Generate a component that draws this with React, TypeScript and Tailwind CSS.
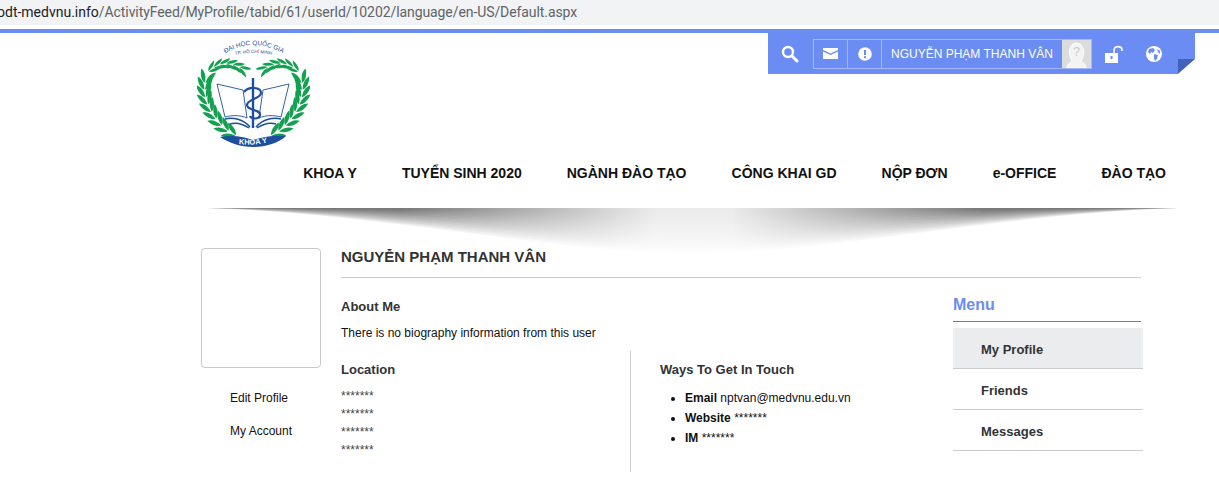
const leaves = (p0: number[], p1: number[], p2: number[], p3: number[], n: number) => {
  const out: { x: number; y: number; a: number }[] = []
  for (let i = 0; i < n; i++) {
    const t = (i + 0.5) / n
    const u = 1 - t
    const x = u * u * u * p0[0] + 3 * u * u * t * p1[0] + 3 * u * t * t * p2[0] + t * t * t * p3[0]
    const y = u * u * u * p0[1] + 3 * u * u * t * p1[1] + 3 * u * t * t * p2[1] + t * t * t * p3[1]
    const dx = 3 * u * u * (p1[0] - p0[0]) + 6 * u * t * (p2[0] - p1[0]) + 3 * t * t * (p3[0] - p2[0])
    const dy = 3 * u * u * (p1[1] - p0[1]) + 6 * u * t * (p2[1] - p1[1]) + 3 * t * t * (p3[1] - p2[1])
    out.push({ x, y, a: (Math.atan2(dy, dx) * 180) / Math.PI })
  }
  return out
}

function Wreath() {
  const side = leaves([40, 99], [16, 88], [2, 58], [10, 40], 9)
  const top = leaves([11, 35], [22, 24], [36, 25], [48, 34], 6)
  return (
    <g>
      {side.map((l, i) => (
        <g key={i} transform={`translate(${l.x} ${l.y}) rotate(${l.a})`}>
          <path d="M-3 -0.4C-1 -5 5 -7.5 10 -7.5C8 -3 3 -0.4 -3 -0.4Z" fill="#12a150" />
          <path d="M-3 0.4C-1 5 5 7.5 10 7.5C8 3 3 0.4 -3 0.4Z" fill="#12a150" />
        </g>
      ))}
      {top.map((l, i) => (
        <g key={i} transform={`translate(${l.x} ${l.y}) rotate(${l.a})`}>
          <path d="M-3 -0.3C-1 -3.5 4 -5 8 -5C6 -2 3 -0.3 -3 -0.3Z" fill="#12a150" />
          <path d="M-3 0.3C-1 3.5 4 5 8 5C6 2 3 0.3 -3 0.3Z" fill="#12a150" />
        </g>
      ))}
    </g>
  )
}

function Logo() {
  return (
    <svg width="113" height="112" viewBox="0 0 113 112" className="mt-[4px] shrink-0">
      <defs>
        <path id="arcTop" d="M24 19Q56 -3 90 19" />
        <path id="arcSub" d="M30 20Q57 12 83 20" />
        <path id="arcBanner" d="M36 106Q56 110 76 104" />
      </defs>
      <text fontSize="6.4" fill="#1d4f9e" fontFamily="'Liberation Sans', sans-serif">
        <textPath href="#arcTop" startOffset="50%" textAnchor="middle">ĐẠI HỌC QUỐC GIA</textPath>
      </text>
      <text fontSize="4.6" fill="#1d4f9e" fontFamily="'Liberation Sans', sans-serif">
        <textPath href="#arcSub" startOffset="50%" textAnchor="middle">TP. HỒ CHÍ MINH</textPath>
      </text>
      <Wreath />
      <g transform="translate(113 0) scale(-1 1)">
        <Wreath />
      </g>
      {/* book */}
      <path d="M20 47L46 53L50 81C43 78 35 78 28 80Z" fill="#ffffff" stroke="#1d4f9e" strokeWidth="0.9" />
      <path d="M92 47L66 53L62 81C69 78 77 78 84 80Z" fill="#ffffff" stroke="#1d4f9e" strokeWidth="0.9" />
      <path d="M28 82C36 80 46 82 53 90M33 87C39 85 46 87 52 91" fill="none" stroke="#1d4f9e" strokeWidth="1.5" />
      <path d="M84 82C76 80 66 82 59 90M79 87C73 85 66 87 60 91" fill="none" stroke="#1d4f9e" strokeWidth="1.5" />
      {/* staff and snake */}
      <path d="M56 41V91" stroke="#1d4f9e" strokeWidth="2.4" />
      <path d="M47 55C52 49 64 50 64 56C64 62 50 62 50 68C50 74 64 72 63 78C62 83 54 82 53 79" fill="none" stroke="#1d4f9e" strokeWidth="2.2" />
      {/* banner */}
      <path d="M23 100C36 98 44 99 56 103C68 99 78 98 89 99C82 106 68 110 56 110C44 110 32 106 23 100Z" fill="#1d4f9e" />
      <text fontSize="7.5" fontWeight="700" fill="#ffffff" fontFamily="'Liberation Sans', sans-serif">
        <textPath href="#arcBanner" startOffset="50%" textAnchor="middle">KHOA Y</textPath>
      </text>
    </svg>
  )
}

function Toolbar() {
  return (
    <div className="relative ml-auto mr-[24px] flex h-[41px] w-[427px] items-center bg-[#6b8cf2] pl-[13px]">
      <svg width="18" height="18" viewBox="0 0 18 18" fill="none" className="shrink-0">
        <circle cx="7" cy="7" r="5" stroke="#fff" strokeWidth="2.4" />
        <path d="M11 11L16 16" stroke="#fff" strokeWidth="3" strokeLinecap="round" />
      </svg>
      <div className="ml-[14px] flex h-[30px] items-stretch border border-[#a3b8f6]">
        <div className="flex w-[34px] items-center justify-center border-r border-[#a3b8f6]">
          <svg width="15" height="11" viewBox="0 0 15 11">
            <path d="M0 0H15V2L7.5 5.5L0 2Z" fill="#fff" />
            <path d="M0 3.5L7.5 7L15 3.5V11H0Z" fill="#fff" />
          </svg>
        </div>
        <div className="flex w-[34px] items-center justify-center border-r border-[#a3b8f6]">
          <svg width="14" height="14" viewBox="0 0 14 14">
            <circle cx="7" cy="7" r="6.8" fill="#fff" />
            <rect x="6" y="3" width="2" height="5" fill="#6b8cf2" />
            <rect x="6" y="9.2" width="2" height="2" fill="#6b8cf2" />
          </svg>
        </div>
        <div className="flex w-[180px] items-center pl-[9px] text-[12px] whitespace-nowrap text-white">NGUYỄN PHẠM THANH VÂN</div>
        <div className="flex h-[28px] w-[29px] items-center justify-center overflow-hidden bg-[#dcdcdc]">
          <svg width="29" height="28" viewBox="0 0 29 28">
            <path d="M5 28C5 23 9 23 10 21C6 15 6 4 14.5 3C23 4 23 15 19 21C20 23 24 23 24 28Z" fill="#f3f3f3" stroke="#fff" />
            <text x="14.5" y="16" fontSize="12" fill="#c9c9c9" textAnchor="middle" fontFamily="'Liberation Sans', sans-serif">?</text>
          </svg>
        </div>
      </div>
      <svg width="19" height="18" viewBox="0 0 19 18" className="ml-[13px] shrink-0">
        <rect x="0" y="8" width="13" height="10" fill="#fff" />
        <rect x="5.5" y="11" width="2" height="3" fill="#6b8cf2" />
        <path d="M9 8V5C9 0.5 17 0.5 17 5V6" fill="none" stroke="#fff" strokeWidth="1.6" />
      </svg>
      <svg width="16" height="16" viewBox="0 0 16 16" className="ml-[22px] shrink-0">
        <circle cx="8" cy="8" r="8" fill="#fff" />
        <path d="M3 3L7 2L9 4L7 7L5 6L4 8L2 6ZM8 8L12 9L11 13L9 15L8 12ZM11 3L14 5L14 8L12 6Z" fill="#6b8cf2" />
      </svg>
      <svg width="17" height="15" viewBox="0 0 17 15" className="absolute right-0 bottom-0">
        <path d="M17 0H0V15Z" fill="#4362b8" />
        <path d="M17 0V15H0Z" fill="#ffffff" />
      </svg>
    </div>
  )
}

function NavBar() {
  const items = ['KHOA Y', 'TUYỂN SINH 2020', 'NGÀNH ĐÀO TẠO', 'CÔNG KHAI GD', 'NỘP ĐƠN', 'e-OFFICE', 'ĐÀO TẠO']
  return (
    <div className="flex justify-end gap-[45px] pr-[53px] text-[14px] leading-[16px] font-bold whitespace-nowrap text-[#111]">
      {items.map((item) => (
        <span key={item}>{item}</span>
      ))}
    </div>
  )
}

function NavShadow() {
  // stacked lens shapes give the soft lower edge
  const depths = Array.from({ length: 16 }, (_, i) => 5 + i * 2.7)
  return (
    <svg width="975" height="46" viewBox="0 0 975 46" className="ml-[205px] block shrink-0">
      <defs>
        <linearGradient id="mid" x1="0" y1="0" x2="1" y2="0">
          <stop offset="0.2" stopColor="#ffffff" stopOpacity="0" />
          <stop offset="0.46" stopColor="#ffffff" stopOpacity="0.85" />
          <stop offset="0.54" stopColor="#ffffff" stopOpacity="0.85" />
          <stop offset="0.8" stopColor="#ffffff" stopOpacity="0" />
        </linearGradient>
      </defs>
      {depths.map((d) => (
        <path key={d} d={`M0 0H975C800 ${d * 0.12} 620 ${d} 487 ${d}C355 ${d} 175 ${d * 0.12} 0 0Z`} fill="#000000" fillOpacity="0.042" />
      ))}
      <rect x="0" y="0" width="975" height="46" fill="url(#mid)" />
    </svg>
  )
}

function SideMenu() {
  const items = ['My Profile', 'Friends', 'Messages']
  return (
    <div className="mt-[17px] w-[190px] shrink-0">
      <div className="mr-[2px] border-b border-[#5a78d8] pb-[6px] text-[16px] leading-[20px] font-bold text-[#6b8cf2]">Menu</div>
      <div className="mt-[6px]">
        {items.map((item, i) => (
          <div
            key={item}
            className={`flex h-[41px] items-center border-b border-[#cccccc] pt-[4px] pl-[28px] text-[13px] font-bold text-[#333] ${i === 0 ? 'bg-[#ebecee]' : ''}`}
          >
            {item}
          </div>
        ))}
      </div>
    </div>
  )
}

export default function App() {
  return (
    <div className="flex h-[501px] w-[1219px] flex-col overflow-hidden bg-white font-['Liberation_Sans',Arial,sans-serif] text-[12px] text-[#111]">
      <div className="flex h-[25px] items-center overflow-hidden bg-[#f1f3f4] pl-[1px] font-['Roboto',sans-serif] text-[14px] whitespace-nowrap text-[#5f6368]">
        <span className="-ml-[4px] text-[#202124]">odt-medvnu.info</span>
        <span className="tracking-[-0.085px]">/ActivityFeed/MyProfile/tabid/61/userId/10202/language/en-US/Default.aspx</span>
      </div>
      <div className="h-[4px] bg-white" />
      <div className="h-[4px] bg-[#6b8cf2]" />

      <div className="flex h-[132px] items-start pl-[197px]">
        <Logo />
        <Toolbar />
      </div>
      <NavBar />
      <div className="h-[27px]" />
      <NavShadow />

      <div className="-mt-[6px] flex pl-[201px]">
        <div className="w-[120px] shrink-0">
          <div className="h-[120px] rounded-[4px] border border-[#c8c8c8]" />
          <div className="mt-[23px] pl-[29px] leading-[14px]">Edit Profile</div>
          <div className="mt-[19px] pl-[29px] leading-[14px]">My Account</div>
        </div>
        <div className="ml-[20px] w-[800px] shrink-0">
          <div className="border-b border-[#cccccc] pb-[11px] text-[15px] leading-[18px] font-bold text-[#333]">NGUYỄN PHẠM THANH VÂN</div>
          <div className="flex">
            <div className="w-[612px] shrink-0">
              <div className="mt-[21px] text-[13px] leading-[16px] font-bold text-[#333]">About Me</div>
              <div className="mt-[11px] leading-[14px]">There is no biography information from this user</div>
              <div className="mt-[11px] flex h-[121px]">
                <div className="w-[290px] border-r border-[#cccccc] pt-[11px]">
                  <div className="text-[13px] leading-[16px] font-bold text-[#333]">Location</div>
                  <div className="mt-[9px] flex flex-col leading-[18px] text-[#444]">
                    <span>*******</span>
                    <span>*******</span>
                    <span>*******</span>
                    <span>*******</span>
                  </div>
                </div>
                <div className="pt-[11px] pl-[29px]">
                  <div className="text-[13px] leading-[16px] font-bold text-[#333]">Ways To Get In Touch</div>
                  <ul className="mt-[10px] list-disc pl-[25px] leading-[20px]">
                    <li><b>Email</b> nptvan@medvnu.edu.vn</li>
                    <li><b>Website</b> *******</li>
                    <li><b>IM</b> *******</li>
                  </ul>
                </div>
              </div>
            </div>
            <SideMenu />
          </div>
        </div>
      </div>
    </div>
  )
}
